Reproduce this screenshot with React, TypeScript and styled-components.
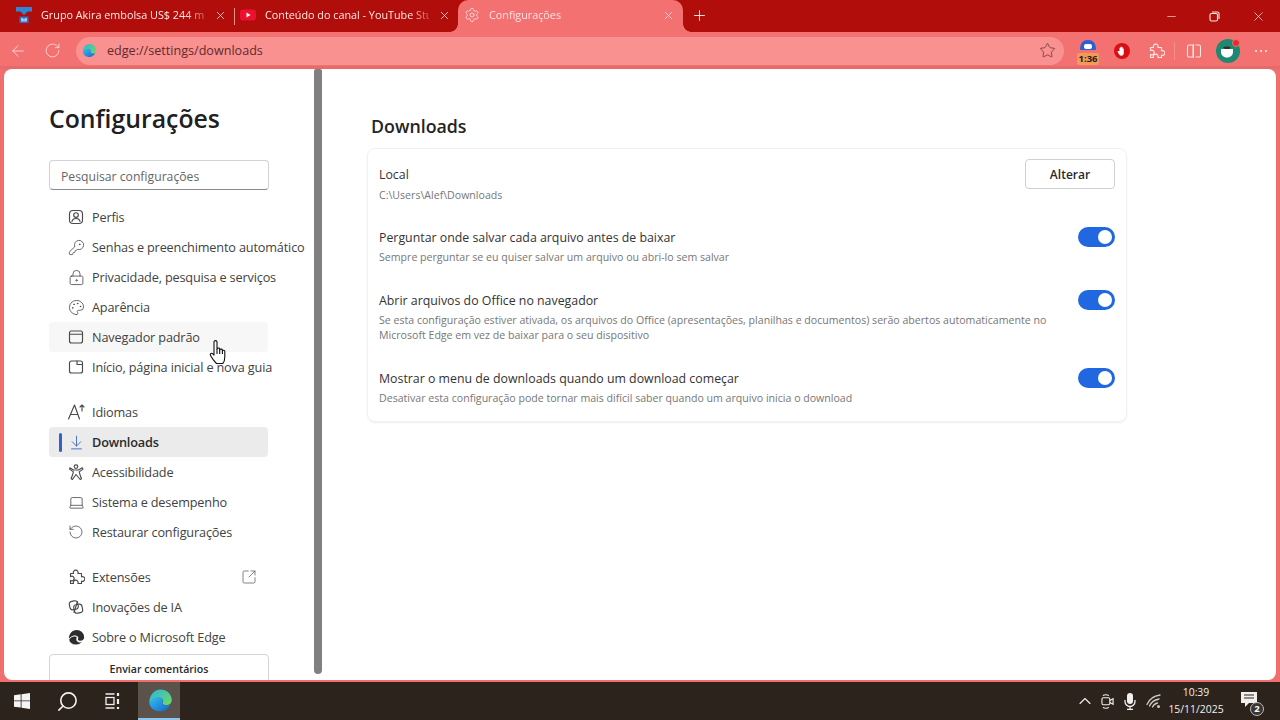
import React from 'react';
import styled, { createGlobalStyle } from 'styled-components';
import {
  ArrowLeft, RotateCw, Star, X, Plus, Minus, KeyRound, LockKeyhole, Palette, ArrowDownToLine,
  Laptop, RotateCcw, SquareArrowOutUpRight, Search, ChevronUp, Settings,
} from 'lucide-react';

const FONT = `"Open Sans", "Noto Sans", "Liberation Sans", sans-serif`;

const Global = createGlobalStyle`
  html, body { margin: 0; padding: 0; background: #f06e6e; }
  #root { width: 1280px; height: 720px; }
  * { box-sizing: border-box; }
`;

const Page = styled.div`
  position: relative;
  width: 1280px;
  height: 720px;
  overflow: hidden;
  display: flex;
  flex-direction: column;
  font-family: ${FONT};
  background: #f06e6e;
`;

const TabStrip = styled.div`
  height: 32px;
  flex: none;
  display: flex;
  align-items: stretch;
  padding-left: 8px;
  background: #b10d0b;
`;

const Tab = styled.div<{ $active?: boolean; $sep?: boolean }>`
  position: relative;
  width: ${p => (p.$active ? '225px' : '224px')};
  margin-left: ${p => (p.$active ? '2px' : '0')};
  padding: ${p => (p.$active ? '0 8px 2px 6px' : '0 5px 2px 8px')};
  display: flex;
  align-items: center;
  gap: 9px;
  color: ${p => (p.$active ? '#ffe3e3' : '#ffe9e6')};
  background: ${p => (p.$active ? '#f37171' : 'transparent')};
  border-radius: ${p => (p.$active ? '10px 10px 0 0' : '0')};
  &::before {
    content: '';
    display: ${p => (p.$sep ? 'block' : 'none')};
    position: absolute;
    left: 2px;
    top: 8px;
    width: 1px;
    height: 17px;
    background: #e88f8c;
  }
`;

const TabCurveLeft = styled.span`
  position: absolute;
  left: -8px;
  bottom: 0;
  width: 8px;
  height: 8px;
  background: radial-gradient(circle at 0 0, transparent 7.5px, #f37171 8px);
`;

const TabCurveRight = styled.span`
  position: absolute;
  right: -8px;
  bottom: 0;
  width: 8px;
  height: 8px;
  background: radial-gradient(circle at 100% 0, transparent 7.5px, #f37171 8px);
`;

const TabIconBox = styled.span`
  width: 16px;
  height: 16px;
  flex: none;
  display: flex;
  align-items: center;
  justify-content: center;
`;

const TabTitle = styled.span`
  flex: 1;
  min-width: 0;
  white-space: nowrap;
  font-size: 10.8px;
  line-height: 16px;
  -webkit-mask-image: linear-gradient(to right, #000 88%, rgba(0, 0, 0, 0.4) 98%);
  mask-image: linear-gradient(to right, #000 88%, rgba(0, 0, 0, 0.4) 98%);
`;

const NewTab = styled.span`
  width: 32px;
  padding-bottom: 2px;
  display: flex;
  align-items: center;
  justify-content: center;
  color: #fff;
`;

const WindowButtons = styled.div`
  margin-left: auto;
  display: flex;
  color: #fbe6e4;
`;

const WindowButton = styled.span`
  width: 43.5px;
  display: flex;
  align-items: center;
  justify-content: center;
`;

const Toolbar = styled.div`
  height: 34px;
  flex: none;
  display: flex;
  align-items: center;
  padding-top: 3px;
  background: #f37171;
  color: #ffe7e3;
`;

const ToolButton = styled.span<{ $w: number; $ml?: number }>`
  position: relative;
  width: ${p => p.$w}px;
  margin-left: ${p => p.$ml || 0}px;
  height: 28px;
  flex: none;
  display: flex;
  align-items: center;
  justify-content: center;
`;

const AddressBar = styled.div`
  width: 988px;
  height: 28px;
  flex: none;
  margin-left: 7px;
  border-radius: 14px;
  background: #f99191;
  display: flex;
  align-items: center;
  padding-left: 6px;
  gap: 10px;
`;

const AddressText = styled.span`
  flex: 1;
  font-size: 12.6px;
  color: #5f2b2b;
`;

const ToolbarSep = styled.span`
  width: 1px;
  height: 18px;
  flex: none;
  background: #f08f8c;
`;

const TimerBadge = styled.span`
  position: absolute;
  left: 13px;
  top: 16px;
  width: 22px;
  height: 12px;
  border-radius: 2px;
  background: #f29a5c;
  color: #2a1b12;
  font-size: 9.5px;
  font-weight: 700;
  line-height: 12px;
  text-align: center;
`;

const ToolbarEdge = styled.div`
  height: 3px;
  flex: none;
  background: #e66a6a;
`;

const Frame = styled.div`
  flex: 1;
  min-height: 0;
  margin: 0 4px 2px;
  background: #fff;
  border-radius: 8px;
  overflow: hidden;
  display: flex;
`;

const Sidebar = styled.aside`
  width: 310px;
  flex: none;
  padding: 31px 0 0 45px;
  display: flex;
  flex-direction: column;
  overflow: hidden;
`;

const SidebarTitle = styled.h1`
  margin: 0;
  font-size: 24.8px;
  line-height: 36px;
  font-weight: 600;
  color: #202020;
  white-space: nowrap;
`;

const SearchBox = styled.div`
  width: 220px;
  height: 30px;
  flex: none;
  margin-top: 24px;
  padding: 3px 0 0 11px;
  border: 1px solid #d2d2d2;
  border-bottom: 1.5px solid #8a8a8a;
  border-radius: 4px;
  display: flex;
  align-items: center;
  font-size: 12.2px;
  color: #666;
`;

const NavGroup = styled.nav<{ $top: number }>`
  margin-top: ${p => p.$top}px;
  display: flex;
  flex-direction: column;
  flex: none;
`;

const NavRow = styled.div<{ $active?: boolean; $hover?: boolean }>`
  position: relative;
  width: 219px;
  height: 30px;
  flex: none;
  padding-left: 18px;
  display: flex;
  align-items: center;
  gap: 7px;
  border-radius: 4px;
  white-space: nowrap;
  font-size: 12.7px;
  letter-spacing: -0.16px;
  font-weight: ${p => (p.$active ? 600 : 400)};
  color: ${p => (p.$active ? '#2a2a2a' : '#424242')};
  background: ${p => (p.$active ? '#ebebeb' : p.$hover ? '#f7f7f7' : 'transparent')};
  &::before {
    content: '';
    display: ${p => (p.$active ? 'block' : 'none')};
    position: absolute;
    left: 10px;
    top: 6px;
    width: 3px;
    height: 19px;
    border-radius: 2px;
    background: #2f62c4;
  }
`;

const NavIcon = styled.span<{ $color?: string }>`
  width: 18px;
  height: 18px;
  flex: none;
  display: flex;
  align-items: center;
  justify-content: center;
  color: ${p => p.$color || '#4a4a4a'};
`;

const NavTail = styled.span`
  position: absolute;
  right: 11px;
  top: 7px;
  display: flex;
  color: #555;
`;

const FeedbackButton = styled.div`
  width: 220px;
  height: 30px;
  flex: none;
  margin-top: 2px;
  border: 1px solid #d4d4d4;
  border-radius: 4px;
  display: flex;
  align-items: center;
  justify-content: center;
  font-size: 10.6px;
  font-weight: 600;
  color: #2a2a2a;
`;

const ScrollBar = styled.div`
  width: 8px;
  height: 605px;
  flex: none;
  background: #808080;
  border-radius: 2px 2px 4px 4px;
`;

const Main = styled.main`
  flex: 1;
  padding: 43px 0 0 45px;
`;

const Heading = styled.h2`
  margin: 0 0 8px 4px;
  font-size: 17.8px;
  line-height: 28px;
  font-weight: 600;
  color: #242424;
`;

const Card = styled.section`
  width: 760px;
  padding: 15px 11px;
  display: flex;
  flex-direction: column;
  gap: 25px;
  border: 1px solid #f1f1f1;
  border-radius: 8px;
  box-shadow: 0 1px 2px rgba(0, 0, 0, 0.07);
`;

const SettingRow = styled.div`
  display: flex;
  align-items: flex-start;
  justify-content: space-between;
`;

const SettingText = styled.div<{ $gap: number }>`
  flex: 1;
  min-width: 0;
  padding-top: 1px;
  margin-bottom: ${p => 2 - p.$gap}px;
  display: flex;
  flex-direction: column;
  gap: ${p => p.$gap}px;
`;

const SettingTitle = styled.div`
  font-size: 12.35px;
  line-height: 20px;
  color: #333;
`;

const SettingSub = styled.div`
  max-width: 690px;
  font-size: 10.6px;
  line-height: 15px;
  color: #777;
`;

const ChangeButton = styled.div`
  width: 90px;
  height: 30px;
  margin-top: -5px;
  flex: none;
  border: 1px solid #d0d0d0;
  border-radius: 4px;
  display: flex;
  align-items: center;
  justify-content: center;
  font-size: 12px;
  font-weight: 600;
  color: #2a2a2a;
`;

const Toggle = styled.span`
  width: 37px;
  height: 20px;
  flex: none;
  padding-right: 3px;
  border-radius: 10px;
  background: #2167e0;
  display: flex;
  align-items: center;
  justify-content: flex-end;
`;

const ToggleKnob = styled.span`
  width: 14px;
  height: 14px;
  border-radius: 50%;
  background: #fff;
`;

const Taskbar = styled.footer`
  height: 38px;
  flex: none;
  display: flex;
  align-items: stretch;
  background: #2d231d;
  color: #f2f0ee;
`;

const TaskButton = styled.span<{ $w: number; $active?: boolean; $ml?: number }>`
  width: ${p => p.$w}px;
  margin-left: ${p => p.$ml || 0}px;
  padding-left: ${p => (p.$active ? '3px' : '0')};
  flex: none;
  display: flex;
  align-items: center;
  justify-content: center;
  background: ${p => (p.$active ? '#5b524c' : 'transparent')};
  border-bottom: ${p => (p.$active ? '2px solid #8cc6ee' : '0')};
`;

const Tray = styled.div`
  margin-left: auto;
  padding-right: 11px;
  display: flex;
  align-items: center;
`;

const TrayIcon = styled.span<{ $w: number }>`
  width: ${p => p.$w}px;
  display: flex;
  align-items: center;
  justify-content: center;
`;

const Clock = styled.div`
  width: 64px;
  display: flex;
  flex-direction: column;
  align-items: center;
  font-size: 10.4px;
  line-height: 17px;
  color: #f2f0ee;
`;

const Notify = styled.span`
  position: relative;
  width: 41px;
  display: flex;
  justify-content: center;
`;

const NotifyBadge = styled.span`
  position: absolute;
  left: 22px;
  top: 6px;
  width: 14px;
  height: 14px;
  border-radius: 50%;
  border: 1px solid #bbb;
  background: #3b3531;
  color: #fff;
  font-size: 9.5px;
  font-weight: 700;
  line-height: 12px;
  text-align: center;
`;

const CursorLayer = styled.span`
  position: absolute;
  left: 208px;
  top: 339px;
  width: 22px;
  height: 26px;
  color: #111;
`;

const Ico: React.FC<{ s?: number; children: React.ReactNode; w?: number }> = ({ s = 18, w = 1.15, children }) => (
  <svg width={s} height={s} viewBox="0 0 18 18" fill="none" stroke="currentColor" strokeWidth={w} strokeLinecap="round" strokeLinejoin="round">
    {children}
  </svg>
);

const EdgeLogo: React.FC<{ s: number; id: string }> = ({ s, id }) => (
  <svg width={s} height={s} viewBox="0 0 24 24">
    <defs>
      <linearGradient id={`${id}a`} x1="0" y1="0" x2="1" y2="1">
        <stop offset="0" stopColor="#35c1f1" />
        <stop offset="1" stopColor="#1463c8" />
      </linearGradient>
      <linearGradient id={`${id}b`} x1="0" y1="0" x2="1" y2="1">
        <stop offset="0" stopColor="#2cb5e0" />
        <stop offset="1" stopColor="#6fdc5a" />
      </linearGradient>
    </defs>
    <path d="M12 1.5C18 1.5 22.8 6 22.8 11.6c0 3-2.3 5-5.4 5-1.9 0-3.4-.9-3.4-2.2 0-.7.6-1 .6-1.9 0-1.9-1.9-3.4-4.6-3.4-3.5 0-6.6 2.4-8.7 5C1.4 6.8 5.8 1.5 12 1.5z" fill={`url(#${id}b)`} />
    <path d="M1.3 14.1c1.5-3.4 4.8-5.5 8.4-5.5 2.6 0 4.6 1.2 4.6 3.1 0 .5-.3 1-.3 1.7 0 2.4 2.6 3.5 5 3.2 1 0 1.8-.2 2.4-.5-1.7 3.6-5.3 6.4-9.6 6.4C6.5 22.5 1.6 19 1.3 14.1z" fill={`url(#${id}a)`} />
  </svg>
);

const AkiraIcon = () => (
  <svg width="16" height="16" viewBox="0 0 16 16">
    <path d="M0 0h16v4.500h-4.500L8 8 4.500 4.500H0z" fill="#2f86d8" />
    <path d="M3.500 9.500h9V16h-9z" fill="#2f6fc4" />
    <path d="M5 11h2l1 1.500L9 11h2v3.500H5z" fill="#b9dcf6" opacity=".8" />
  </svg>
);

const YoutubeIcon = () => (
  <svg width="16" height="16" viewBox="0 0 16 16">
    <rect x="0" y="2.500" width="16" height="11" rx="3" fill="#ee1030" />
    <path d="M6.500 5.600L10.600 8l-4.100 2.400z" fill="#fff" />
  </svg>
);

const PuzzleIcon: React.FC<{ s?: number }> = ({ s = 18 }) => (
  <Ico s={s}>
    <path d="M3.500 5.500H6.500a2.400 2.400 0 1 1 4.400 0h3.600v3.300a2.400 2.400 0 1 1 0 4.400v2.300h-3.600a2.400 2.400 0 1 0-4.400 0H3.500v-3.100a2.300 2.300 0 1 0 0-3.800z" />
  </Ico>
);

const ProfileIcon = () => (
  <Ico>
    <rect x="2.500" y="2.500" width="13" height="13" rx="3.500" />
    <circle cx="9" cy="7" r="2.300" />
    <path d="M5 13.500c.4-2 2-3 4-3s3.600 1 4 3" />
  </Ico>
);

const BrowserIcon = () => (
  <Ico>
    <rect x="2.500" y="3" width="13" height="12" rx="2" />
    <path d="M2.500 6.200h13" />
  </Ico>
);

const HomeTabIcon = () => (
  <Ico>
    <path d="M4.500 3h9a2 2 0 0 1 2 2v8a2 2 0 0 1-2 2h-9a2 2 0 0 1-2-2V5a2 2 0 0 1 2-2z" />
    <path d="M10 3v3.500h5.500" />
  </Ico>
);

const LanguageIcon = () => (
  <Ico>
    <path d="M1.500 16L7.500 2l5 14M3.500 11.500h7.500" />
    <path d="M15 8V2M13 4l2-2 2 2" />
  </Ico>
);

const AccessIcon = () => (
  <Ico>
    <circle cx="9" cy="3.600" r="1.800" />
    <path d="M2.800 4.800L6.500 7h5l3.700-2.200.8 1.300-3.800 2.800.9 3.100 1.400 3.800-1.300.7L9 11.500l-3.600 5-1.300-.7 1.400-3.800.9-3.100L2.600 6.100z" />
  </Ico>
);

const AiIcon = () => (
  <Ico>
    <rect x="2.500" y="3" width="8.500" height="8.500" rx="3" transform="rotate(-12 7 7)" />
    <rect x="7" y="6.500" width="8.500" height="8.500" rx="3" transform="rotate(-12 11 11)" />
    <path d="M10.500 3.500L7 14.500" />
  </Ico>
);

const EdgeMono = () => (
  <svg width="17" height="17" viewBox="0 0 24 24" fill="#2d2d2d">
    <path d="M12 1.500C18 1.500 22.800 6 22.800 11.600c0 3-2.300 5-5.400 5-1.900 0-3.400-.9-3.400-2.200 0-.7.600-1 .6-1.900 0-1.900-1.900-3.400-4.600-3.400-3.500 0-6.600 2.400-8.700 5C1.400 6.800 5.800 1.500 12 1.500z" />
    <path d="M1.300 15c1.500-3.400 4.800-5 7.900-5 2.500 0 3.600 1.300 3.600 2.500-1.200 2.600-.5 6.400 5 6 1 0 2-.3 2.800-.7-1.800 2.700-5 4.700-8.900 4.700C6.500 22.500 1.600 19.500 1.300 15z" stroke="#fff" strokeWidth="1.200" />
  </svg>
);

const Windows = () => (
  <svg width="16" height="16" viewBox="0 0 16 16" fill="#f4f4f4">
    <path d="M0 2.300L6.700 1.300V7.500H0zM7.500 1.200L16 0V7.500H7.500zM0 8.300H6.700V14.600L0 13.700zM7.500 8.300H16V16L7.500 14.800z" />
  </svg>
);

const TaskView = () => (
  <svg width="18" height="18" viewBox="0 0 18 18" fill="none" stroke="#f2f0ee" strokeWidth="1.300">
    <path d="M1.500 2h9M1.500 16h9" />
    <rect x="2" y="5.500" width="8" height="7" />
    <path d="M14 1v3M14 7v5M14 15v2" strokeWidth="2.200" />
  </svg>
);

const CamTray = () => (
  <svg width="13" height="15" viewBox="0 0 14 16" fill="none" stroke="#f2f0ee" strokeWidth="1.200">
    <rect x="1" y="4" width="8.500" height="7.500" rx="1.500" />
    <path d="M9.500 7l3.500-2v6l-3.500-2M2 1.500c2-1 4.500-1 6.500 0M2 14.500c2 1 4.500 1 6.500 0" />
  </svg>
);

const MicTray = () => (
  <svg width="12" height="17" viewBox="0 0 12 17" fill="#f2f0ee">
    <rect x="3" y="0" width="6" height="11" rx="3" />
    <path d="M1 7v1.500a5 5 0 0 0 10 0V7M6 13.500V16M3 16.300h6" fill="none" stroke="#f2f0ee" strokeWidth="1.300" />
  </svg>
);

const WifiTray = () => (
  <svg width="16" height="16" viewBox="0 0 16 16" fill="none" stroke="#cfcac6" strokeWidth="1.300" strokeLinecap="round">
    <path d="M1 11.500C3 6.500 7 3 14 2M3.500 13C5 9.500 8 7 13 6M6.500 14C7.500 12 9 10.500 11.500 10" />
    <circle cx="12.500" cy="13.500" r="1.500" fill="#cfcac6" stroke="none" />
  </svg>
);

const CursorHand = () => (
  <svg width="22" height="26" viewBox="0 0 22 26" fill="#fff" stroke="currentColor" strokeWidth="1.100" strokeLinejoin="round">
    <path d="M6 3c0-1.800 3-1.800 3 0v7c0-1.300 2.600-1.300 2.700 0v1c0-1.200 2.600-1.200 2.700 0v1c0-1 2.400-1 2.400.3V18c0 3-1.500 6-2 6.500H8.500C7 23 3.800 19 2.500 16.500c-.9-1.800 1-3 2.300-1.700L6 16z" />
    <path d="M9 10v5M11.700 11v4M14.400 12v3" fill="none" />
  </svg>
);

type Item = { label: string; icon: React.ReactNode; active?: boolean; hover?: boolean; color?: string; tail?: boolean };

const navTop: Item[] = [
  { label: 'Perfis', icon: <ProfileIcon /> },
  { label: 'Senhas e preenchimento automático', icon: <KeyRound size={17} strokeWidth={1.15} /> },
  { label: 'Privacidade, pesquisa e serviços', icon: <LockKeyhole size={17} strokeWidth={1.15} /> },
  { label: 'Aparência', icon: <Palette size={17} strokeWidth={1.15} /> },
  { label: 'Navegador padrão', icon: <BrowserIcon />, hover: true },
  { label: 'Início, página inicial e nova guia', icon: <HomeTabIcon /> },
];

const navMiddle: Item[] = [
  { label: 'Idiomas', icon: <LanguageIcon /> },
  { label: 'Downloads', icon: <ArrowDownToLine size={17} strokeWidth={1.2} />, active: true, color: '#2f62c4' },
  { label: 'Acessibilidade', icon: <AccessIcon /> },
  { label: 'Sistema e desempenho', icon: <Laptop size={17} strokeWidth={1.15} /> },
  { label: 'Restaurar configurações', icon: <RotateCcw size={16} strokeWidth={1.15} /> },
];

const navBottom: Item[] = [
  { label: 'Extensões', icon: <PuzzleIcon />, tail: true },
  { label: 'Inovações de IA', icon: <AiIcon /> },
  { label: 'Sobre o Microsoft Edge', icon: <EdgeMono /> },
];

const NavList: React.FC<{ items: Item[]; top: number }> = ({ items, top }) => (
  <NavGroup $top={top}>
    {items.map(i => (
      <NavRow key={i.label} $active={i.active} $hover={i.hover}>
        <NavIcon $color={i.color}>{i.icon}</NavIcon>
        {i.label}
        {i.tail && (
          <NavTail>
            <SquareArrowOutUpRight size={16} strokeWidth={1.1} />
          </NavTail>
        )}
      </NavRow>
    ))}
  </NavGroup>
);

const settings = [
  { title: 'Perguntar onde salvar cada arquivo antes de baixar', sub: 'Sempre perguntar se eu quiser salvar um arquivo ou abri-lo sem salvar' },
  {
    title: 'Abrir arquivos do Office no navegador',
    sub: 'Se esta configuração estiver ativada, os arquivos do Office (apresentações, planilhas e documentos) serão abertos automaticamente no Microsoft Edge em vez de baixar para o seu dispositivo',
  },
  { title: 'Mostrar o menu de downloads quando um download começar', sub: 'Desativar esta configuração pode tornar mais difícil saber quando um arquivo inicia o download' },
];

export default function App() {
  return (
    <Page>
      <Global />
      <TabStrip>
        <Tab>
          <TabIconBox><AkiraIcon /></TabIconBox>
          <TabTitle>Grupo Akira embolsa US$ 244 mil</TabTitle>
          <X size={13} strokeWidth={1.4} />
        </Tab>
        <Tab $sep>
          <TabIconBox><YoutubeIcon /></TabIconBox>
          <TabTitle>Conteúdo do canal - YouTube Stu</TabTitle>
          <X size={13} strokeWidth={1.4} />
        </Tab>
        <Tab $active>
          <TabCurveLeft />
          <TabCurveRight />
          <TabIconBox><Settings size={16} strokeWidth={1.2} /></TabIconBox>
          <TabTitle>Configurações</TabTitle>
          <X size={13} strokeWidth={1.4} />
        </Tab>
        <NewTab><Plus size={17} strokeWidth={1.2} /></NewTab>
        <WindowButtons>
          <WindowButton><Minus size={13} strokeWidth={1.2} /></WindowButton>
          <WindowButton>
            <svg width="11" height="11" viewBox="0 0 11 11" fill="none" stroke="currentColor" strokeWidth="1.100">
              <rect x="1" y="2.500" width="7.500" height="7.500" rx="1.500" />
              <path d="M3 1h5.500A1.500 1.500 0 0 1 10 2.500V8" />
            </svg>
          </WindowButton>
          <WindowButton><X size={15} strokeWidth={1.2} /></WindowButton>
        </WindowButtons>
      </TabStrip>
      <Toolbar>
        <ToolButton $w={36}><ArrowLeft size={18} strokeWidth={1.1} /></ToolButton>
        <ToolButton $w={33}><RotateCw size={17} strokeWidth={1.1} /></ToolButton>
        <AddressBar>
          <EdgeLogo s={15} id="addr" />
          <AddressText>edge://settings/downloads</AddressText>
          <ToolButton $w={34}><Star size={17} strokeWidth={1.1} color="#6b3434" /></ToolButton>
        </AddressBar>
        <ToolButton $w={48}>
          <svg width="16" height="16" viewBox="0 0 16 16" style={{ marginTop: -6 }}>
            <path d="M0 10C0 3 3 0 8 0s8 3 8 10z" fill="#2c5fd6" />
            <rect x="4" y="4" width="8" height="5" rx="2" fill="#fff" />
          </svg>
          <TimerBadge>1:36</TimerBadge>
        </ToolButton>
        <ToolButton $w={19}>
          <svg width="16" height="16" viewBox="0 0 16 16">
            <circle cx="8" cy="8" r="8" fill="#d80f14" />
            <path d="M5.500 8V5c0-.8 1-.8 1 0V4c0-.8 1.200-.8 1.200 0v.5c0-.7 1.100-.7 1.100 0V6c0-.7 1-.7 1 0v4c0 1.500-1 2.700-2.400 2.700-1.400 0-2-.8-2.700-2L3.700 9c-.4-.7.500-1.200 1-.7z" fill="#fff" />
          </svg>
        </ToolButton>
        <ToolButton $w={36} $ml={7}><PuzzleIcon /></ToolButton>
        <ToolbarSep />
        <ToolButton $w={37}>
          <svg width="16" height="16" viewBox="0 0 16 16" fill="none" stroke="currentColor" strokeWidth="1.100">
            <path d="M7 2H3a1.500 1.500 0 0 0-1.500 1.500v9A1.500 1.500 0 0 0 3 14h4zM9.500 2H13a1.500 1.500 0 0 1 1.500 1.500v9A1.500 1.500 0 0 1 13 14H9.500M7.500 1v14" />
          </svg>
        </ToolButton>
        <ToolButton $w={32}>
          <svg width="24" height="24" viewBox="0 0 24 24">
            <circle cx="12" cy="12" r="12" fill="#1c8a72" />
            <path d="M5 10h12v3c0 3-2.500 5.500-6 5.500S5 16 5 13z" fill="#fff" />
            <path d="M7 8.500c2-1.500 6-1.500 8 0L13 10H9z" fill="#3a2a22" />
            <circle cx="20" cy="4" r="3.500" fill="#e32c2c" stroke="#f37171" strokeWidth="1" />
          </svg>
        </ToolButton>
        <ToolButton $w={33}>
          <svg width="14" height="4" viewBox="0 0 14 4" fill="currentColor">
            <circle cx="2" cy="2" r="1.100" />
            <circle cx="7" cy="2" r="1.100" />
            <circle cx="12" cy="2" r="1.100" />
          </svg>
        </ToolButton>
      </Toolbar>
      <ToolbarEdge />
      <Frame>
        <Sidebar>
          <SidebarTitle>Configurações</SidebarTitle>
          <SearchBox>Pesquisar configurações</SearchBox>
          <NavList items={navTop} top={12} />
          <NavList items={navMiddle} top={15} />
          <NavList items={navBottom} top={15} />
          <FeedbackButton>Enviar comentários</FeedbackButton>
        </Sidebar>
        <ScrollBar />
        <Main>
          <Heading>Downloads</Heading>
          <Card>
            <SettingRow>
              <SettingText $gap={3}>
                <SettingTitle>Local</SettingTitle>
                <SettingSub>C:\Users\Alef\Downloads</SettingSub>
              </SettingText>
              <ChangeButton>Alterar</ChangeButton>
            </SettingRow>
            {settings.map(s => (
              <SettingRow key={s.title}>
                <SettingText $gap={2}>
                  <SettingTitle>{s.title}</SettingTitle>
                  <SettingSub>{s.sub}</SettingSub>
                </SettingText>
                <Toggle><ToggleKnob /></Toggle>
              </SettingRow>
            ))}
          </Card>
        </Main>
      </Frame>
      <Taskbar>
        <TaskButton $w={44}><Windows /></TaskButton>
        <TaskButton $w={46}>
          <Search size={23} strokeWidth={1.7} style={{ transform: 'scaleX(-1)' }} />
        </TaskButton>
        <TaskButton $w={46}><TaskView /></TaskButton>
        <TaskButton $w={42} $ml={2} $active><EdgeLogo s={25} id="task" /></TaskButton>
        <Tray>
          <TrayIcon $w={26}><ChevronUp size={20} strokeWidth={1.3} /></TrayIcon>
          <TrayIcon $w={18}><CamTray /></TrayIcon>
          <TrayIcon $w={28}><MicTray /></TrayIcon>
          <TrayIcon $w={20}><WifiTray /></TrayIcon>
          <Clock>
            <span>10:39</span>
            <span>15/11/2025</span>
          </Clock>
          <Notify>
            <svg width="16" height="15" viewBox="0 0 16 15" fill="#f2f0ee" style={{ marginTop: -4 }}>
              <path d="M0 0h16v11H8l-4 4v-4H0z" />
              <path d="M3 3h10M3 6h10" stroke="#2d231d" strokeWidth="1" />
            </svg>
            <NotifyBadge>2</NotifyBadge>
          </Notify>
        </Tray>
      </Taskbar>
      <CursorLayer><CursorHand /></CursorLayer>
    </Page>
  );
}
